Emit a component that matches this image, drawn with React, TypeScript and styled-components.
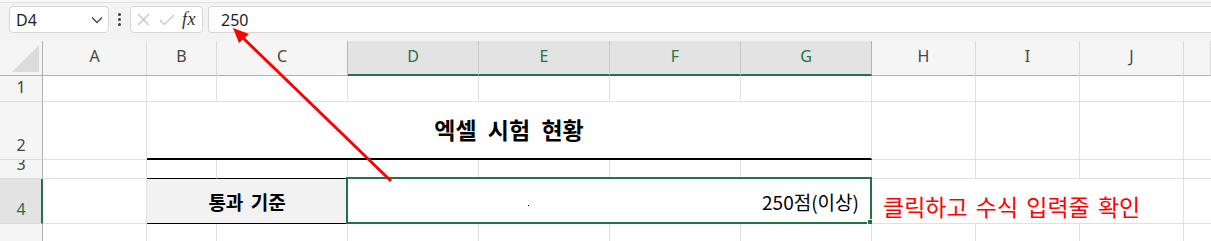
import React from "react";
import styled, { createGlobalStyle } from "styled-components";

const GREEN = "#217346";
const GRID = "#e1e1e1";
const KFONT = `"Noto Sans CJK KR", "Noto Sans", sans-serif`;

const GlobalStyle = createGlobalStyle`
  *, *::before, *::after { box-sizing: border-box; }
  html, body { margin: 0; padding: 0; background: #ffffff; }
  body { font-family: "Noto Sans", "Noto Sans CJK KR", sans-serif; }
`;

const Sheet = styled.div`
  position: relative;
  width: 1211px;
  height: 241px;
  overflow: hidden;
  background: #fff;
`;

/* ---------- formula bar ---------- */
const FormulaBar = styled.div`
  height: 41px;
  display: flex;
  align-items: flex-start;
  padding: 6px 0 0 9px;
  background: linear-gradient(#f7f7f7 0 2px, #e3e3e3 2px 3px, #f3f3f3 3px);
`;

const NameBox = styled.div`
  width: 100px;
  height: 27px;
  display: flex;
  align-items: center;
  justify-content: space-between;
  padding: 0 5px 0 6px;
  background: #fff;
  border: 1px solid #d6d6d6;
  border-radius: 4px;
  font-size: 16px;
  color: #1f1f1f;
`;

const MoreDots = styled.div`
  width: 21px;
  height: 27px;
  display: flex;
  flex-direction: column;
  align-items: center;
  justify-content: center;
  gap: 2px;
`;

const Dot = styled.span`
  width: 3px;
  height: 3px;
  border-radius: 50%;
  background: #3c3c3c;
`;

const FxBox = styled.div`
  width: 73px;
  height: 27px;
  display: flex;
  align-items: center;
  padding-left: 6px;
  gap: 9px;
  background: #fff;
  border: 1px solid #d6d6d6;
  border-radius: 4px;
`;

const FxLabel = styled.span`
  font-family: "Liberation Serif", serif;
  font-style: italic;
  font-size: 18px;
  color: #333;
  margin-left: -2px;
  letter-spacing: 0.5px;
`;

const FormulaInput = styled.div`
  flex: 1;
  height: 27px;
  margin-left: 5px;
  display: flex;
  align-items: center;
  padding-left: 12px;
  background: #fff;
  border: 1px solid #d6d6d6;
  border-right: none;
  border-radius: 4px 0 0 4px;
  font-size: 16px;
  color: #1f1f1f;
`;

/* ---------- grid ---------- */
const Grid = styled.div`
  display: grid;
  grid-template-columns: 43px 104px 70px repeat(5, 131px) repeat(3, 104px) 1fr;
  grid-template-rows: 35px 26px 58px 19px 45px 40px;
`;

const Corner = styled.div`
  background: #f5f5f5;
  border-right: 1px solid #b1b1b1;
  border-bottom: 1px solid #b1b1b1;
`;

type Sep = "light" | "mid" | "edge";
const sepColor = (s?: Sep) => (s === "edge" ? "#b4b4b4" : s === "mid" ? "#c9c9c9" : "#dcdcdc");

const ColHeader = styled.div<{ $selected?: boolean; $sep?: Sep }>`
  display: flex;
  align-items: center;
  justify-content: center;
  padding-bottom: ${(p) => (p.$selected ? 3 : 4)}px;
  font-size: 16px;
  color: ${(p) => (p.$selected ? GREEN : "#444")};
  background: ${(p) => (p.$selected ? "#e3e3e3" : "#f5f5f5")};
  border-right: 1px solid ${(p) => sepColor(p.$sep)};
  border-bottom: ${(p) => (p.$selected ? `2px solid ${GREEN}` : "1px solid #b1b1b1")};
`;

const RowHeader = styled.div<{ $selected?: boolean }>`
  display: flex;
  align-items: flex-end;
  justify-content: center;
  overflow: hidden;
  padding-bottom: 6px;
  padding-left: ${(p) => (p.$selected ? 1 : 0)}px;
  font-size: 16px;
  line-height: 16px;
  color: ${(p) => (p.$selected ? GREEN : "#444")};
  background: ${(p) => (p.$selected ? "#e3e3e3" : "#f5f5f5")};
  border-right: ${(p) => (p.$selected ? `2px solid ${GREEN}` : "1px solid #b1b1b1")};
  border-bottom: 1px solid #dcdcdc;
`;

const Cell = styled.div<{
  $span?: number;
  $fill?: string;
  $bottom?: string;
  $justify?: string;
  $align?: string;
  $noRight?: boolean;
}>`
  position: relative;
  min-width: 0;
  grid-column: span ${(p) => p.$span ?? 1};
  display: flex;
  align-items: ${(p) => p.$align ?? "center"};
  justify-content: ${(p) => p.$justify ?? "flex-start"};
  background: ${(p) => p.$fill ?? "#fff"};
  border-right: ${(p) => (p.$noRight ? "none" : `1px solid ${GRID}`)};
  border-bottom: ${(p) => p.$bottom ?? `1px solid ${GRID}`};
  font-family: ${KFONT};
`;

const Title = styled.span`
  font-size: 23px;
  font-weight: 700;
  word-spacing: 6px;
  color: #000;
  margin-bottom: 2px;
`;

const Label = styled.span`
  font-size: 19px;
  font-weight: 700;
  word-spacing: 3px;
  color: #000;
`;

const Value = styled.span`
  font-size: 19px;
  color: #000;
  padding-right: 12px;
`;

const Note = styled.span`
  font-size: 23px;
  line-height: 30px;
  color: #ff0000;
  white-space: nowrap;
  word-spacing: 3px;
  padding: 0 0 2px 11px;
`;

const Selection = styled.div`
  position: absolute;
  top: -2px;
  left: -2px;
  right: -1px;
  bottom: -1px;
  border: 2px solid ${GREEN};
  pointer-events: none;
`;

const FillHandle = styled.div`
  position: absolute;
  right: -3px;
  bottom: -3px;
  width: 6px;
  height: 6px;
  background: ${GREEN};
  outline: 1px solid #fff;
`;

const Speck = styled.div`
  position: absolute;
  left: 180px;
  top: 26px;
  width: 1px;
  height: 1px;
  background: #000;
`;

const ArrowLayer = styled.svg`
  position: absolute;
  left: 0;
  top: 0;
  pointer-events: none;
`;

const COLS = ["A", "B", "C", "D", "E", "F", "G", "H", "I", "J", "K"];
const SELECTED = new Set(["D", "E", "F", "G"]);

const headerSep = (c: string): Sep => {
  if (c === "C" || c === "G") return "edge";
  if (SELECTED.has(c)) return "mid";
  return "light";
};

const PlainRow: React.FC<{ n: number; bottoms?: Record<string, string> }> = ({ n, bottoms }) => (
  <>
    <RowHeader>{n}</RowHeader>
    {COLS.map((c) => (
      <Cell key={c} $noRight={c === "K"} $bottom={bottoms?.[c]} />
    ))}
  </>
);

export default function App() {
  return (
    <Sheet>
      <GlobalStyle />
      <FormulaBar>
        <NameBox>
          <span>D4</span>
          <svg width="12" height="8" viewBox="0 0 12 8">
            <path d="M1 1.5 L6 6.5 L11 1.5" fill="none" stroke="#444" strokeWidth="1.3" />
          </svg>
        </NameBox>
        <MoreDots>
          <Dot />
          <Dot />
          <Dot />
        </MoreDots>
        <FxBox>
          <svg width="13" height="13" viewBox="0 0 13 13">
            <path d="M1 1 L12 12 M12 1 L1 12" stroke="#c4c4c4" strokeWidth="1.2" />
          </svg>
          <svg width="16" height="12" viewBox="0 0 16 12">
            <path d="M1 6 L5.5 10.5 L15 1" fill="none" stroke="#c4c4c4" strokeWidth="1.2" />
          </svg>
          <FxLabel>fx</FxLabel>
        </FxBox>
        <FormulaInput>250</FormulaInput>
      </FormulaBar>

      <Grid>
        <Corner>
          <svg width="42" height="34" viewBox="0 0 42 34">
            <polygon points="39,4 39,31 12,31" fill="#dcdcdc" />
          </svg>
        </Corner>
        {COLS.map((c) => (
          <ColHeader key={c} $selected={SELECTED.has(c)} $sep={headerSep(c)}>
            {c === "K" ? "" : c}
          </ColHeader>
        ))}

        <PlainRow n={1} />

        <RowHeader>2</RowHeader>
        <Cell />
        <Cell $span={6} $justify="center" $bottom="2px solid #000">
          <Title>엑셀 시험 현황</Title>
        </Cell>
        <Cell />
        <Cell />
        <Cell />
        <Cell $noRight />

        <PlainRow n={3} bottoms={{ B: "1px solid #000", C: "1px solid #000" }} />

        <RowHeader $selected>4</RowHeader>
        <Cell />
        <Cell $span={2} $fill="#f2f2f2" $justify="center" $bottom="1px solid #000">
          <Label>통과 기준</Label>
        </Cell>
        <Cell $span={4} $justify="flex-end">
          <Value>250점(이상)</Value>
          <Speck />
          <Selection />
          <FillHandle />
        </Cell>
        <Cell $span={3} $align="flex-end">
          <Note>클릭하고 수식 입력줄 확인</Note>
        </Cell>
        <Cell $noRight />

        <PlainRow n={5} />
      </Grid>

      <ArrowLayer width={1211} height={241} viewBox="0 0 1211 241">
        <line x1={391} y1={181} x2={242} y2={37} stroke="#ff0000" strokeWidth={3} />
        <polygon points="233,28 249,34 239,43" fill="#ff0000" />
      </ArrowLayer>
    </Sheet>
  );
}
